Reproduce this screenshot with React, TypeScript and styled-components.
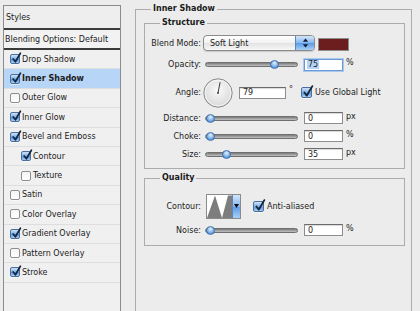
import React from "react";
import styled, { createGlobalStyle, css } from "styled-components";

const GlobalStyle = createGlobalStyle`
  html, body {
    margin: 0;
    padding: 0;
    background: #ececec;
  }
  body {
    font-family: "DejaVu Sans", "Liberation Sans", sans-serif;
    font-size: 8px;
    color: #1b1b1b;
  }
`;

interface StyleItem
{
    name : string
    checked? : boolean
    selected? : boolean
    indent? : boolean
}

const styleItems : StyleItem[] = [
    { name: "Drop Shadow", checked: true },
    { name: "Inner Shadow", checked: true, selected: true },
    { name: "Outer Glow" },
    { name: "Inner Glow", checked: true },
    { name: "Bevel and Emboss", checked: true },
    { name: "Contour", checked: true, indent: true },
    { name: "Texture", indent: true },
    { name: "Satin" },
    { name: "Color Overlay" },
    { name: "Gradient Overlay", checked: true },
    { name: "Pattern Overlay" },
    { name: "Stroke", checked: true },
];

function CheckBox({ checked, size } : { checked? : boolean, size : number })
{
    return (
        <Box checked={checked} size={size}>
            {checked && (
                <CheckMark width={size} height={size} viewBox="0 0 10 10">
                    <path d="M2.2 5 L4.4 7.8 L9.4 -0.8" fill="none" stroke="#132741" strokeWidth="1.7" strokeLinecap="round" strokeLinejoin="round" />
                </CheckMark>
            )}
        </Box>
    );
}

function Slider({ value } : { value : number })
{
    return (
        <Track>
            <Thumb style={{ left: `${Math.round(value * 84)}px` }} />
        </Track>
    );
}

function NumberField({ value, width, focused } : { value : string, width : number, focused? : boolean })
{
    return (
        <Field width={width} focused={focused}>
            <FieldValue focused={focused}>{value}</FieldValue>
        </Field>
    );
}

function AngleDial({ angle } : { angle : number })
{
    const rad = angle * Math.PI / 180;
    const x = 15 + 11 * Math.cos(rad);
    const y = 15 - 11 * Math.sin(rad);
    return (
        <Dial width="30" height="30" viewBox="0 0 30 30">
            <defs>
                <radialGradient id="dialFill" cx="50%" cy="40%" r="60%">
                    <stop offset="0%" stopColor="#fafafa" />
                    <stop offset="100%" stopColor="#d8d8d8" />
                </radialGradient>
            </defs>
            <circle cx="15" cy="15" r="14.2" fill="url(#dialFill)" stroke="#8b8b8b" strokeWidth="1" />
            <circle cx="15" cy="15" r="12.8" fill="none" stroke="#ffffff" strokeWidth="0.8" opacity="0.8" />
            <line x1="15" y1="15" x2={x} y2={y} stroke="#3a3a3a" strokeWidth="1" />
            <circle cx="15" cy="15" r="0.9" fill="#3a3a3a" />
        </Dial>
    );
}

function App()
{
    return (
        <Window>
            <GlobalStyle />
            <StylesPanel>
                <PanelHeader>Styles</PanelHeader>
                <BlendingRow>Blending Options: Default</BlendingRow>
                {styleItems.map(item => (
                    <StyleRow key={item.name} selected={item.selected} indent={item.indent}>
                        <CheckBox checked={item.checked} size={10} />
                        <StyleName selected={item.selected}>{item.name}</StyleName>
                    </StyleRow>
                ))}
            </StylesPanel>

            <EffectGroup>
                <GroupTitle>Inner Shadow</GroupTitle>

                <SubGroup pad="4px 6px 5px 0">
                    <SubTitle>Structure</SubTitle>

                    <FieldRow height={20}>
                        <Label>Blend Mode:</Label>
                        <Select>
                            <SelectText>Soft Light</SelectText>
                            <SelectButton>
                                <svg width="7" height="10" viewBox="0 0 7 10">
                                    <path d="M3.5 0.5 L6.2 3.8 L0.8 3.8 Z" fill="#0f1f3a" />
                                    <path d="M3.5 9.5 L6.2 6.2 L0.8 6.2 Z" fill="#0f1f3a" />
                                </svg>
                            </SelectButton>
                        </Select>
                        <Swatch color="#6c1d1d" />
                    </FieldRow>

                    <FieldRow height={23}>
                        <Label>Opacity:</Label>
                        <Slider value={0.76} />
                        <NumberField value="75" width={39} focused />
                        <Unit>%</Unit>
                    </FieldRow>

                    <FieldRow height={33}>
                        <Label>Angle:</Label>
                        <AngleDial angle={79} />
                        <NumberField value="79" width={47} />
                        <Degree>°</Degree>
                        <CheckGroup>
                            <CheckBox checked size={11} />
                            <CheckText>Use Global Light</CheckText>
                        </CheckGroup>
                    </FieldRow>

                    <FieldRow height={18}>
                        <Label>Distance:</Label>
                        <Slider value={0} />
                        <NumberField value="0" width={39} />
                        <Unit>px</Unit>
                    </FieldRow>

                    <FieldRow height={18}>
                        <Label>Choke:</Label>
                        <Slider value={0} />
                        <NumberField value="0" width={39} />
                        <Unit>%</Unit>
                    </FieldRow>

                    <FieldRow height={18}>
                        <Label>Size:</Label>
                        <Slider value={0.19} />
                        <NumberField value="35" width={39} />
                        <Unit>px</Unit>
                    </FieldRow>
                </SubGroup>

                <SubGroup pad="7px 6px 6px 0" spaced>
                    <SubTitle>Quality</SubTitle>

                    <FieldRow height={30}>
                        <Label>Contour:</Label>
                        <ContourPicker>
                            <ContourPreview>
                                <svg width="25" height="23" viewBox="0 0 25 23" preserveAspectRatio="none">
                                    <path d="M0 23 L8 0.5 L15 23 L21 0.5 L25 0.5 L25 23 Z" fill="#7d7d7d" />
                                </svg>
                            </ContourPreview>
                            <ContourButton>
                                <svg width="5" height="4" viewBox="0 0 5 4">
                                    <path d="M0 0 L5 0 L2.5 4 Z" fill="#0c0c0c" />
                                </svg>
                            </ContourButton>
                        </ContourPicker>
                        <CheckGroup gap={12}>
                            <CheckBox checked size={11} />
                            <CheckText>Anti-aliased</CheckText>
                        </CheckGroup>
                    </FieldRow>

                    <FieldRow height={18}>
                        <Label>Noise:</Label>
                        <Slider value={0} />
                        <NumberField value="0" width={39} />
                        <Unit>%</Unit>
                    </FieldRow>
                </SubGroup>
            </EffectGroup>
        </Window>
    );
}

const Window = styled.div`
    display: flex;
    align-items: flex-start;
    width: 420px;
    height: 311px;
    overflow: hidden;
    background: #ececec;
`;

const StylesPanel = styled.div`
    box-sizing: border-box;
    flex: none;
    width: 118px;
    height: 330px;
    margin: 5px 0 0 3px;
    border: 1px solid #8c8c8c;
    border-bottom: none;
    background: #f0f0f0;
`;

const PanelHeader = styled.div`
    box-sizing: border-box;
    display: flex;
    align-items: center;
    height: 24px;
    padding-left: 2px;
    border-bottom: 2px solid #3b3b3b;
    background: #eeeeee;
`;

const BlendingRow = styled.div`
    box-sizing: border-box;
    display: flex;
    align-items: center;
    height: 20px;
    padding-left: 1px;
    border-bottom: 2px solid #3b3b3b;
    background: #f2f2f2;
`;

const StyleRow = styled.div<{ selected? : boolean, indent? : boolean }>`
    box-sizing: border-box;
    display: flex;
    align-items: center;
    height: 19.4px;
    padding-left: ${props => props.indent ? "17px" : "6px"};
    border-bottom: 1px solid #dedede;
    background: ${props => props.selected ? "#b7d5f6" : "#f0f0f0"};
`;

const StyleName = styled.span<{ selected? : boolean }>`
    margin-left: 2px;
    font-weight: ${props => props.selected ? "bold" : "normal"};
`;

const Box = styled.span<{ checked? : boolean, size : number }>`
    position: relative;
    box-sizing: border-box;
    flex: none;
    width: ${props => props.size}px;
    height: ${props => props.size}px;
    border: 1px solid ${props => props.checked ? "#4a6f9c" : "#8e8e8e"};
    border-radius: 2px;
    background: ${props => props.checked
        ? "linear-gradient(#cfe3f8, #7fb0e6 50%, #5a95dc 55%, #a9cdf2)"
        : "linear-gradient(#f4f4f4, #ffffff)"};
    box-shadow: 0 1px 0 rgba(255, 255, 255, 0.6);
`;

const CheckMark = styled.svg`
    position: absolute;
    left: 0;
    top: -1px;
    overflow: visible;
`;

const EffectGroup = styled.fieldset`
    box-sizing: border-box;
    flex: none;
    width: 277px;
    min-height: 330px;
    margin: 3px 0 0 14px;
    padding: 2px 6px 0 8px;
    border: 1px solid #acacac;
    border-bottom: none;
`;

const GroupTitle = styled.legend`
    margin-left: 7px;
    padding: 0 2px;
    font-weight: bold;
    line-height: 12px;
`;

const SubGroup = styled.fieldset<{ pad : string, spaced? : boolean }>`
    display: flex;
    flex-direction: column;
    margin: ${props => props.spaced ? "3px" : "0"} 0 0 0;
    padding: ${props => props.pad};
    border: 1px solid #acacac;
    min-width: 0;
`;

const SubTitle = styled.legend`
    margin-left: 15px;
    padding: 0 2px;
    font-weight: bold;
    line-height: 12px;
`;

const FieldRow = styled.div<{ height : number }>`
    display: flex;
    align-items: center;
    height: ${props => props.height}px;
`;

const Label = styled.span`
    flex: none;
    width: 56px;
    margin-right: 4px;
    text-align: right;
`;

const Select = styled.div`
    box-sizing: border-box;
    display: flex;
    width: 112px;
    height: 16px;
    margin-left: -2px;
    border: 1px solid #8a8a8a;
    border-radius: 4px;
    overflow: hidden;
    background: linear-gradient(#ffffff, #f1f1f1 50%, #e3e3e3 52%, #f7f7f7);
    box-shadow: 0 1px 1px rgba(0, 0, 0, 0.15);
`;

const SelectText = styled.span`
    flex: 1;
    display: flex;
    align-items: center;
    padding-left: 6px;
`;

const SelectButton = styled.span`
    display: flex;
    align-items: center;
    justify-content: center;
    width: 18px;
    border-left: 1px solid #5d86b8;
    background: linear-gradient(#d3e6fa, #86b6ec 50%, #5b9be4 52%, #a8d0f6);
`;

const Swatch = styled.span<{ color : string }>`
    box-sizing: border-box;
    width: 31px;
    height: 13px;
    margin: 3px 0 0 3px;
    border: 1px solid #8d8d8d;
    background: ${props => props.color};
`;

const Track = styled.div`
    position: relative;
    flex: none;
    box-sizing: border-box;
    width: 93px;
    height: 5px;
    border-radius: 3px;
    border: 1px solid #6f6f6f;
    background: linear-gradient(#7c7c7c, #a4a4a4 60%, #c4c4c4);
`;

const Thumb = styled.span`
    position: absolute;
    top: -3px;
    box-sizing: border-box;
    width: 9px;
    height: 9px;
    border-radius: 50%;
    border: 1px solid #3e6fa9;
    background: radial-gradient(circle at 50% 30%, #e4f1ff, #7db2ec 55%, #3f7fd0);
`;

const Field = styled.span<{ width : number, focused? : boolean }>`
    box-sizing: border-box;
    display: flex;
    align-items: center;
    flex: none;
    width: ${props => props.width}px;
    height: 12px;
    margin-left: 6px;
    padding-left: 2px;
    border: 1px solid #8e8e8e;
    border-top-color: #6b6b6b;
    background: #ffffff;
    box-shadow: inset 0 1px 1px rgba(0, 0, 0, 0.15);
    ${props => props.focused && css`
        border-color: #6a98d4;
        box-shadow: 0 0 0 1px #a9c9ef;
    `}
`;

const FieldValue = styled.span<{ focused? : boolean }>`
    padding: 0 1px;
    line-height: 9px;
    background: ${props => props.focused ? "#b5d3f7" : "transparent"};
`;

const Unit = styled.span`
    margin: 0 0 4px 3px;
`;

const Degree = styled.span`
    margin: 0 0 6px 3px;
`;

const Dial = styled.svg`
    flex: none;
    margin-left: -2px;
`;

const CheckGroup = styled.span<{ gap? : number }>`
    display: flex;
    align-items: center;
    margin-left: ${props => props.gap ?? 8}px;
`;

const CheckText = styled.span`
    margin-left: 3px;
`;

const ContourPicker = styled.span`
    box-sizing: border-box;
    display: flex;
    width: 35px;
    height: 25px;
    margin-left: 1px;
    border: 1px solid #8a8a8a;
    overflow: hidden;
`;

const ContourPreview = styled.span`
    display: flex;
    flex: 1;
    background: #ffffff;
`;

const ContourButton = styled.span`
    display: flex;
    align-items: center;
    justify-content: center;
    width: 8px;
    border-left: 1px solid #5d86b8;
    background: linear-gradient(#d3e6fa, #86b6ec 50%, #5b9be4 52%, #a8d0f6);
`;

export default App;
